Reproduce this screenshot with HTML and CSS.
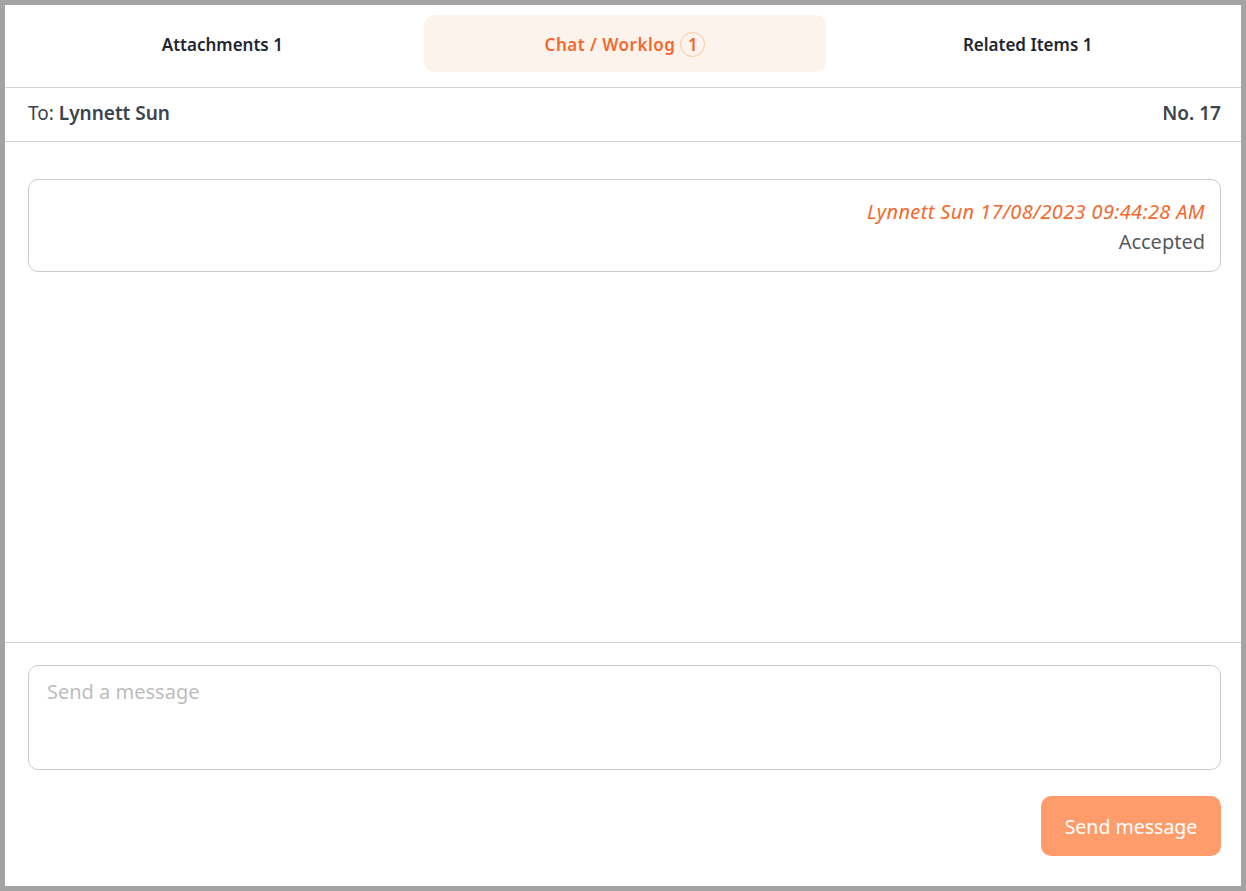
FILE: index.html
```html
<!DOCTYPE html>
<html lang="en">
<head>
<meta charset="utf-8">
<title>Chat / Worklog</title>
<link rel="stylesheet" href="styles.css">
</head>
<body>
<div class="panel">
  <div class="tabs">
    <div class="tab">Attachments 1</div>
    <div class="tab tab-active"><span class="tab-label">Chat / Worklog</span><span class="badge">1</span></div>
    <div class="tab">Related Items 1</div>
  </div>
  <div class="to-row">
    <div class="to">To: <strong>Lynnett Sun</strong></div>
    <div class="num">No. 17</div>
  </div>
  <div class="messages">
    <div class="message">
      <div class="meta">Lynnett Sun 17/08/2023 09:44:28 AM</div>
      <div class="body">Accepted</div>
    </div>
  </div>
  <div class="composer">
    <textarea class="input" placeholder="Send a message"></textarea>
    <div class="actions">
      <button class="send">Send message</button>
    </div>
  </div>
</div>
</body>
</html>
```

FILE: styles.css
```css
* { box-sizing: border-box; }
html, body { margin: 0; padding: 0; }
body {
  background: #a3a3a3;
  padding: 5px;
  font-family: "Noto Sans", "Open Sans", sans-serif;
  color: #3b434d;
}
.panel {
  background: #fff;
  height: 881px;
  display: flex;
  flex-direction: column;
}
.tabs {
  display: grid;
  grid-template-columns: 1fr 1fr 1fr;
  padding: 10px 12px 15px 16px;
  border-bottom: 1px solid #d4d4d4;
}
.tab {
  height: 57px;
  padding-top: 2px;
  display: flex;
  align-items: center;
  justify-content: center;
  gap: 5px;
  font-size: 17px;
  font-weight: 600;
  color: #1f2630;
  border-radius: 10px;
}
.tab-active {
  background: #fdf3ed;
  color: #f3692d;
}
.tab-label { letter-spacing: 0.5px; }
.badge {
  width: 25px;
  height: 25px;
  border-radius: 50%;
  border: 1px solid #f8c99c;
  display: inline-flex;
  align-items: center;
  justify-content: center;
  font-size: 17px;
}
.to-row {
  height: 54px;
  display: flex;
  align-items: center;
  justify-content: space-between;
  padding: 0 20px 3px 23px;
  border-bottom: 1px solid #d4d4d4;
  font-size: 19px;
}
.to strong, .num { font-weight: 600; }
.messages {
  flex: 1;
  padding: 37px 20px 0 23px;
}
.message {
  border: 1px solid #cccccc;
  border-radius: 10px;
  padding: 17px 15px 14px;
  text-align: right;
  font-size: 20px;
  line-height: 30px;
}
.meta {
  color: #f3692d;
  font-style: italic;
  letter-spacing: 0.35px;
}
.body { color: #555a60; }
.composer {
  border-top: 1px solid #d4d4d4;
  padding: 22px 20px 30px 23px;
}
.input {
  display: block;
  width: 100%;
  height: 105px;
  border: 1px solid #cccccc;
  border-radius: 10px;
  resize: none;
  padding: 12px 18px;
  font-family: inherit;
  font-size: 20px;
  color: #3b434d;
  outline: none;
}
.input::placeholder { color: #bdbdbd; }
.actions {
  display: flex;
  justify-content: flex-end;
  margin-top: 26px;
}
.send {
  width: 180px;
  height: 60px;
  border: none;
  border-radius: 10px;
  background: #fe9d6b;
  color: #fff;
  font-family: inherit;
  font-size: 19.5px;
}
```
